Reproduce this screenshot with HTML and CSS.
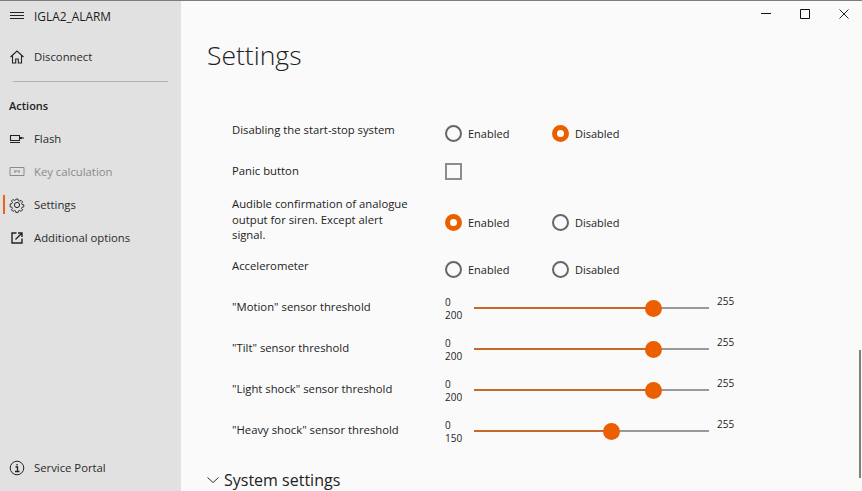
FILE: index.html
```html
<!DOCTYPE html>
<html lang="en">
<head>
<meta charset="utf-8">
<title>Settings</title>
<link rel="stylesheet" href="styles.css">
</head>
<body>
<div class="app">
  <aside class="sidebar">
    <div class="nav-head">
      <svg class="icon" viewBox="0 0 16 16"><path d="M1 3.500h14M1 6.500h14M1 9.500h14" fill="none" stroke="#222" stroke-width="1"/></svg>
      <span class="app-name">IGLA2_ALARM</span>
    </div>
    <div class="nav-item disconnect">
      <svg class="icon" viewBox="0 0 16 16"><path d="M1.500 8 8 2l6.500 6M3.500 6.500v7.500h3.200v-4h2.600v4h3.200V6.500" fill="none" stroke="#222" stroke-width="1.100"/></svg>
      <span>Disconnect</span>
    </div>
    <div class="divider"></div>
    <div class="section">Actions</div>
    <div class="nav-item">
      <svg class="icon" viewBox="0 0 16 16"><path d="M1.500 4.500h9v5h-9zM1 11.500h10" fill="none" stroke="#222" stroke-width="1.100"/><path d="M11 6h2v2h-2zM13 6.500h2v1h-2z" fill="#222"/></svg>
      <span>Flash</span>
    </div>
    <div class="nav-item disabled">
      <svg class="icon" viewBox="0 0 16 16"><path d="M1 3.500h14v8H1z" fill="none" stroke="#8a8a8a"/><path d="M5 7h6M5 8h2M9 8h2" fill="none" stroke="#8a8a8a"/></svg>
      <span>Key calculation</span>
    </div>
    <div class="nav-item active">
      <svg class="icon" viewBox="0 0 16 16"><circle cx="8" cy="8" r="2.600" fill="none" stroke="#222"/><path d="M6.800 1h2.400l.4 2 1.400.6 1.800-1.100 1.700 1.700-1.100 1.800.6 1.400 2 .4v2.400l-2 .4-.6 1.400 1.100 1.800-1.700 1.700-1.800-1.100-1.400.6-.4 2H6.800l-.4-2-1.400-.6-1.800 1.100-1.700-1.700 1.100-1.800-.6-1.400-2-.4V6.800l2-.4.6-1.400-1.100-1.800 1.700-1.700 1.800 1.100 1.400-.6z" transform="translate(1.200 1.200) scale(.85)" fill="none" stroke="#222" stroke-width="1.100"/></svg>
      <span>Settings</span>
    </div>
    <div class="nav-item">
      <svg class="icon" viewBox="0 0 16 16"><path d="M7.500 3H3v10h10V8.500" fill="none" stroke="#222" stroke-width="1.400"/><path d="M6.500 9.500 12.500 3.500M9 3h4v4" fill="none" stroke="#222" stroke-width="1.400"/></svg>
      <span>Additional options</span>
    </div>
    <div class="nav-item portal">
      <svg class="icon" viewBox="0 0 16 16"><circle cx="8" cy="8" r="6.800" fill="none" stroke="#222"/><path d="M6.500 7h2v4.500M6 11.500h4.500M8 4v1.500" fill="none" stroke="#222" stroke-width="1.300"/></svg>
      <span>Service Portal</span>
    </div>
  </aside>
  <main class="main">
    <div class="caption">
      <svg class="cap-btn" viewBox="0 0 10 10"><path d="M0 4.500h10" stroke="#111" fill="none"/></svg>
      <svg class="cap-btn" viewBox="0 0 10 10"><path d="M.5.500h9v9h-9z" stroke="#111" fill="none"/></svg>
      <svg class="cap-btn" viewBox="0 0 10 10"><path d="M.5.500l9 9M9.500.500l-9 9" stroke="#222" fill="none"/></svg>
    </div>
    <h1 class="title">Settings</h1>
    <div class="rows">
      <div class="row r-start">
        <div class="label">Disabling the start-stop system</div>
        <div class="radios">
          <div class="radio"><i class="dot"></i>Enabled</div>
          <div class="radio"><i class="dot on"></i>Disabled</div>
        </div>
      </div>
      <div class="row r-panic">
        <div class="label">Panic button</div>
        <div class="check"></div>
      </div>
      <div class="row r-siren">
        <div class="label">Audible confirmation of analogue output for siren. Except alert signal.</div>
        <div class="radios">
          <div class="radio"><i class="dot on"></i>Enabled</div>
          <div class="radio"><i class="dot"></i>Disabled</div>
        </div>
      </div>
      <div class="row r-accel">
        <div class="label">Accelerometer</div>
        <div class="radios">
          <div class="radio"><i class="dot"></i>Enabled</div>
          <div class="radio"><i class="dot"></i>Disabled</div>
        </div>
      </div>
      <div class="row r-slider">
        <div class="label">"Motion" sensor threshold</div>
        <div class="slider">
          <div class="range-low"><span>0</span><span>200</span></div>
          <div class="track"><div class="fill" style="width:179px"></div></div>
          <div class="range-high">255</div>
        </div>
      </div>
      <div class="row r-slider">
        <div class="label">"Tilt" sensor threshold</div>
        <div class="slider">
          <div class="range-low"><span>0</span><span>200</span></div>
          <div class="track"><div class="fill" style="width:179px"></div></div>
          <div class="range-high">255</div>
        </div>
      </div>
      <div class="row r-slider">
        <div class="label">"Light shock" sensor threshold</div>
        <div class="slider">
          <div class="range-low"><span>0</span><span>200</span></div>
          <div class="track"><div class="fill" style="width:179px"></div></div>
          <div class="range-high">255</div>
        </div>
      </div>
      <div class="row r-slider">
        <div class="label">"Heavy shock" sensor threshold</div>
        <div class="slider">
          <div class="range-low"><span>0</span><span>150</span></div>
          <div class="track"><div class="fill" style="width:137px"></div></div>
          <div class="range-high">255</div>
        </div>
      </div>
    </div>
    <div class="expander">
      <svg class="chev" viewBox="0 0 12 8"><path d="M.5 1.500 6 6.500l5.500-5" fill="none" stroke="#333"/></svg>
      <span>System settings</span>
    </div>
    <div class="scrollbar"></div>
  </main>
</div>
</body>
</html>
```
FILE: styles.css
```css
* { box-sizing: border-box; }
html, body { margin: 0; height: 100%; overflow: hidden; }
body { font-family: "Open Sans", "Noto Sans", sans-serif; font-size: 11.3px; color: #222; background: #fafafa; }
.app { display: flex; height: 491px; border-top: 1px solid #7d7d7d; }

.sidebar { width: 181px; flex: none; background: #e1e1e1; display: flex; flex-direction: column; }
.icon { width: 16px; height: 16px; flex: none; }
.nav-head { display: flex; align-items: center; gap: 9px; height: 32px; padding-left: 9px; }
.app-name { font-size: 11.9px; color: #1c1c1c; margin-top: -2px; }
.nav-item { position: relative; display: flex; align-items: center; gap: 9px; height: 33px; padding-left: 9px; color: #2a2a2a; }
.disconnect { margin-top: 7px; }
.divider { height: 1px; background: #b3b3b3; margin: 8px 13px 0; }
.section { font-size: 11px; font-weight: 600; height: 33px; line-height: 33px; padding-left: 9px; margin-top: 7px; color: #222; }
.disabled { color: #8a8a8a; }
.active::before { content: ""; position: absolute; left: 3px; top: 7px; width: 2px; height: 19px; background: #e8641b; }
.portal { margin-top: auto; margin-bottom: 7px; }

.main { position: relative; flex: 1; min-width: 0; overflow: hidden; background: #fafafa; }
.caption { position: absolute; top: 8px; right: 13px; display: flex; gap: 29px; }
.cap-btn { width: 10px; height: 10px; display: block; }
.title { margin: 35px 0 0 26px; font-size: 26.500px; line-height: 38px; font-weight: 300; color: #222; }

.rows { margin: 46px 0 0 51px; }
.row { display: flex; }
.label { width: 180px; margin-right: 33px; line-height: 15.500px; }
.r-start { height: 41px; padding-top: 2px; }
.r-panic { height: 35px; align-items: flex-start; padding-top: 2px; }
.r-siren { height: 60px; }
.r-accel { height: 37px; padding-top: 2px; }
.r-slider { height: 41px; padding-top: 7px; }
.r-slider .label { margin-top: -1px; }

.radios { display: flex; font-size: 11px; }
.radio { display: flex; align-items: center; width: 107px; gap: 6px; height: 16px; margin-top: 3px; }
.r-siren .radio { margin-top: 18px; }
.dot { width: 17px; height: 17px; border: 2px solid #666; border-radius: 50%; flex: none; background: #fafafa; }
.dot.on { border: 5px solid #ec5f00; background: #fff; }
.check { width: 17px; height: 17px; border: 2px solid #8c8c8c; }

.slider { display: flex; align-items: flex-start; font-size: 10px; }
.range-low { display: flex; flex-direction: column; width: 29px; line-height: 13px; margin-top: -4px; }
.track { position: relative; width: 235px; height: 2px; margin-top: 7px; background: #999; }
.fill { position: relative; height: 2px; background: #c7682b; }
.fill::after { content: ""; position: absolute; right: -9px; top: -7px; width: 17px; height: 17px; border-radius: 50%; background: #ec5f00; }
.range-high { margin-left: 8px; margin-top: -5px; line-height: 13px; }

.expander { display: flex; align-items: center; gap: 5px; margin: 12px 0 0 26px; font-size: 16px; line-height: 22px; }
.chev { width: 12px; height: 8px; }
.scrollbar { position: absolute; right: 1px; top: 349px; width: 2px; height: 128px; background: #7f7f7f; }
```
